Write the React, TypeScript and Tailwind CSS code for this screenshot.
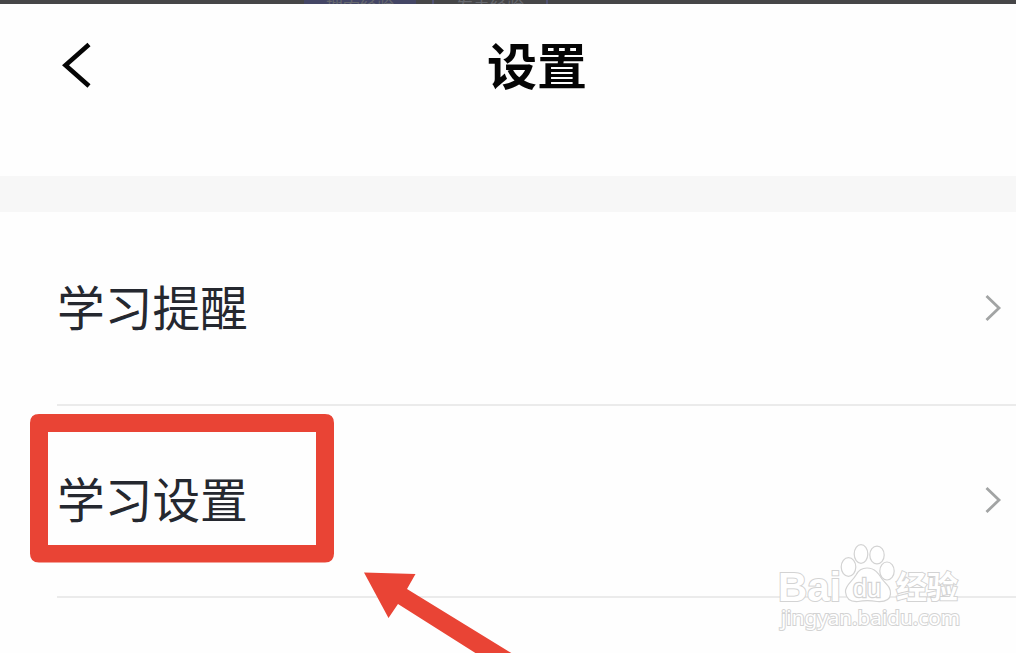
import React from 'react';

type SettingRowProps = {
    label: string;
}

const Chevron = () => (
    <svg className="block shrink-0 mb-0.5" width="20" height="32" viewBox="0 0 20 32" fill="none">
        <path d="M3.5 4L16 16L3.5 28" stroke="#a2a4a4" strokeWidth="2.8" />
    </svg>
);

const SettingRow = ({ label }: SettingRowProps) => {
    return (
        <div className="ml-[57px] h-48 flex items-center justify-between border-b-2 border-[#ebebeb] pr-[13px]">
            <span className="pb-1.5 text-[47.7px] leading-none text-[#25282f]">{label}</span>
            <Chevron />
        </div>
    );
};

/** Slice of the dimmed page that stays visible above the sheet */
const PageBehind = () => (
    <div className="h-1 flex overflow-hidden bg-[#464648] text-[17px] leading-[17px] text-[#66686e]">
        <div className="ml-[304px] w-28 h-1 overflow-hidden bg-[#444665] text-center">
            <span className="block -mt-1">搜索经验</span>
        </div>
        <div className="ml-4 w-[116px] h-1 overflow-hidden border-x-2 border-[#505271] text-center">
            <span className="block -mt-1">发表经验</span>
        </div>
    </div>
);

const Watermark = () => (
    <svg
        className="absolute left-[770px] top-[536px]"
        width="210"
        height="104"
        viewBox="0 0 210 104"
        fill="#ffffff"
        stroke="#d3d3d3"
        strokeWidth="1.2"
        fontFamily='"Liberation Sans", "Noto Sans CJK SC", sans-serif'
    >
        <text x="8" y="65" fontSize="41" fontWeight="700" strokeWidth="2" paintOrder="stroke" textLength="63" lengthAdjust="spacingAndGlyphs">Bai</text>
        <ellipse cx="78.5" cy="31" rx="7.3" ry="9.3" />
        <ellipse cx="91" cy="18" rx="6.8" ry="9.3" />
        <ellipse cx="107" cy="19" rx="7.2" ry="8.9" />
        <ellipse cx="117" cy="35" rx="7.2" ry="9" />
        <path d="M97 32C105 32 109 38 112 43C116 48 121 51 120.500 58C120 65 114 66 107 65.500C99 64 95 64 88 65.500C80 66 76 62 75.500 56C75 49 82 46 86 39C88 35 92 32 97 32Z" />
        <text x="83" y="61" fontSize="25" fontWeight="400" strokeWidth="2.4" paintOrder="stroke" textLength="28" lengthAdjust="spacingAndGlyphs">du</text>
        <text x="126" y="62" fontSize="31" fontWeight="700" strokeWidth="2" paintOrder="stroke">经验</text>
        <text x="11" y="89" fontSize="20" strokeWidth="2" paintOrder="stroke" textLength="179" lengthAdjust="spacingAndGlyphs" fontFamily='"Noto Sans", sans-serif'>jingyan.baidu.com</text>
    </svg>
);

const App = () => {
    return (
        <div className="relative w-[1016px] h-[653px] overflow-hidden bg-[#fefefe] font-['Noto_Sans_CJK_SC',sans-serif]">
            <PageBehind />
            <header className="h-[172px] px-[60px] pt-[34px] grid grid-cols-[1fr_auto_1fr] items-start">
                <svg className="block mt-1" width="34" height="48" viewBox="0 0 34 48" fill="none">
                    <path d="M29 2.5L5.5 23.2L29 44" stroke="#050505" strokeWidth="4.6" />
                </svg>
                <h1 className="ml-[58px] text-[50px] leading-[50px] font-bold text-[#050505]">设置</h1>
            </header>
            <div className="h-9 bg-[#f7f7f7]" />
            <main className="pt-0.5">
                <SettingRow label="学习提醒" />
                <SettingRow label="学习设置" />
            </main>
            {/* Frame and arrow marking the second row */}
            <svg className="absolute left-0 top-0" width="1016" height="653" viewBox="0 0 1016 653" fill="#e94435">
                <path fillRule="evenodd" d="M39 414H325Q334 414 334 423V553.500Q334 562.500 325 562.500H39Q30 562.500 30 553.500V423Q30 414 39 414ZM48 432V545H316V432Z" />
                <path d="M364 572.500L415.500 574L407 589L513 654H477L398 604L388.500 618Z" />
            </svg>
            <Watermark />
        </div>
    );
};

export default App;
